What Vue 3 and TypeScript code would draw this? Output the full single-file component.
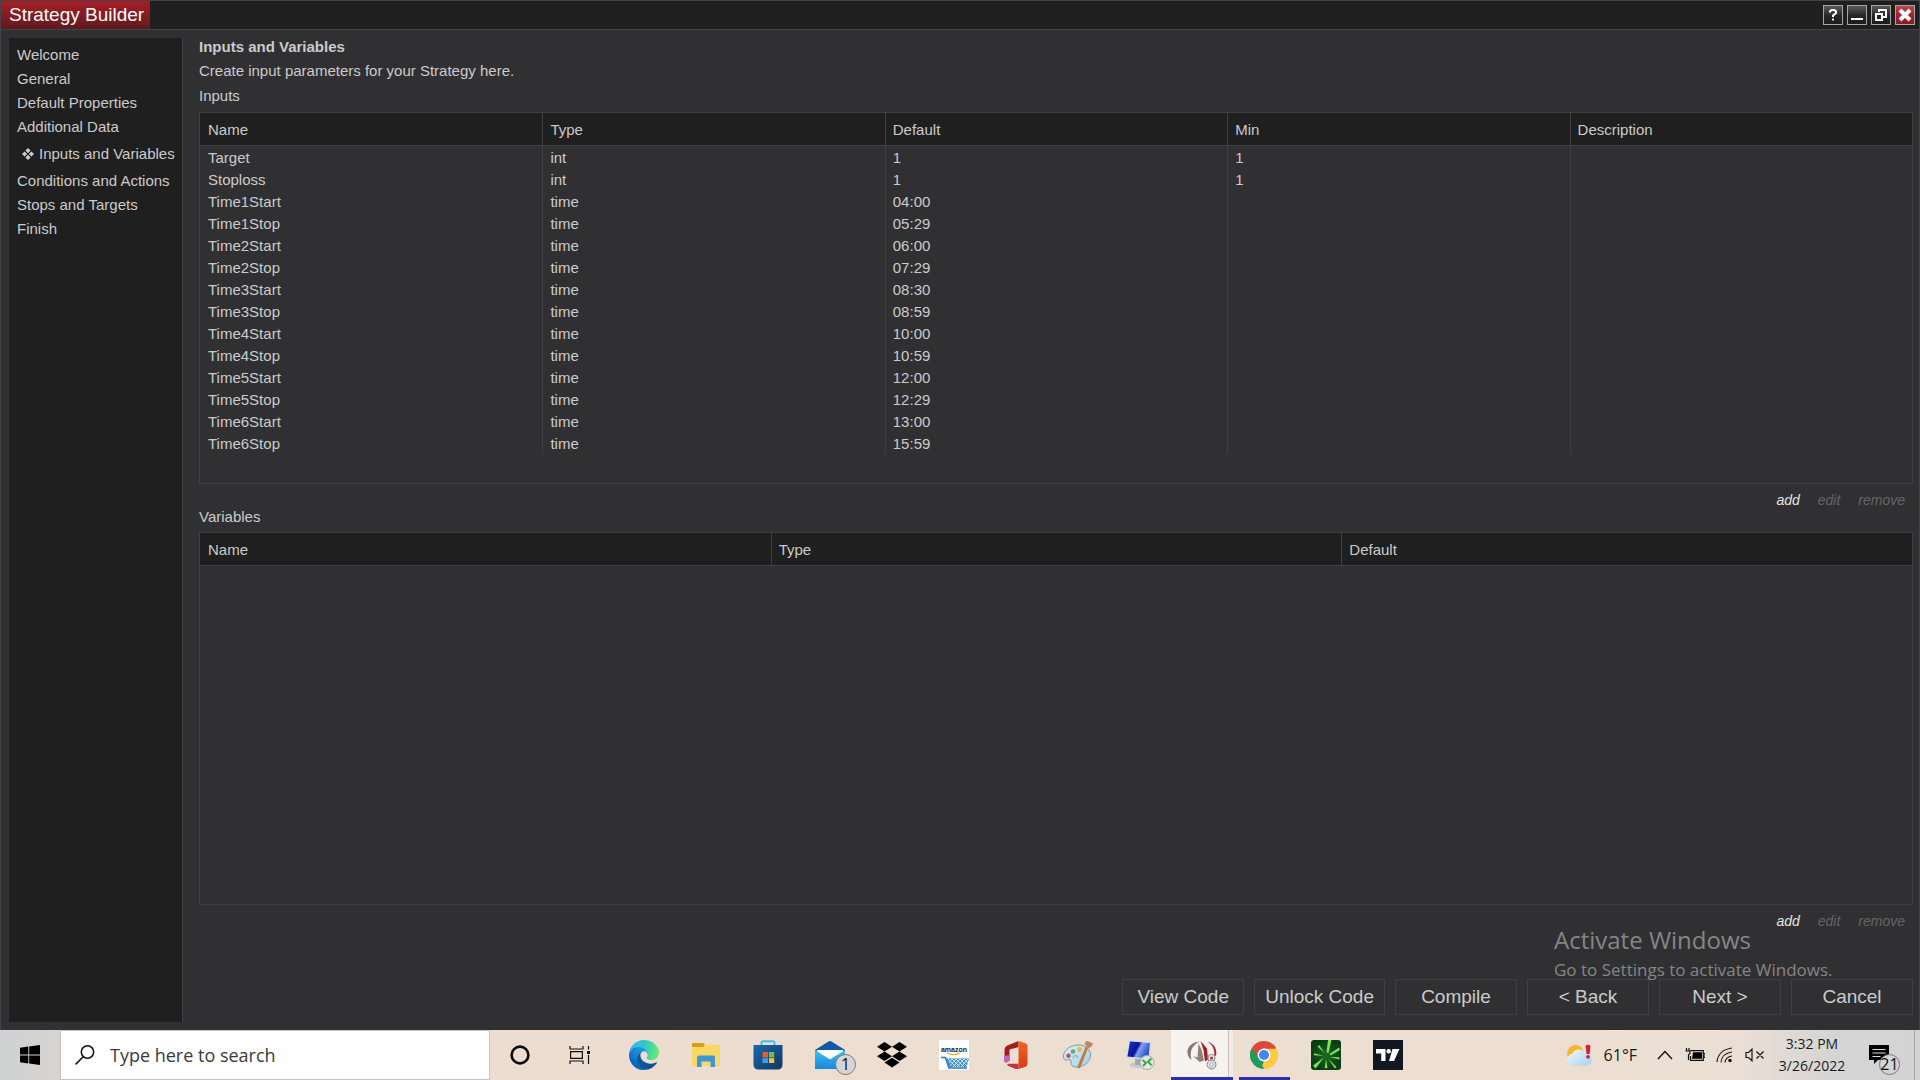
<script setup lang="ts">
interface InputRow {
  name: string
  type: string
  value: string
  min: string
}

const steps: string[] = [
  'Welcome',
  'General',
  'Default Properties',
  'Additional Data',
  'Inputs and Variables',
  'Conditions and Actions',
  'Stops and Targets',
  'Finish',
]
const activeStep = 'Inputs and Variables'

const inputColumns: string[] = ['Name', 'Type', 'Default', 'Min', 'Description']
const variableColumns: string[] = ['Name', 'Type', 'Default']

const timeRow = (name: string, value: string): InputRow => ({ name, type: 'time', value, min: '' })

const inputs: InputRow[] = [
  { name: 'Target', type: 'int', value: '1', min: '1' },
  { name: 'Stoploss', type: 'int', value: '1', min: '1' },
  timeRow('Time1Start', '04:00'),
  timeRow('Time1Stop', '05:29'),
  timeRow('Time2Start', '06:00'),
  timeRow('Time2Stop', '07:29'),
  timeRow('Time3Start', '08:30'),
  timeRow('Time3Stop', '08:59'),
  timeRow('Time4Start', '10:00'),
  timeRow('Time4Stop', '10:59'),
  timeRow('Time5Start', '12:00'),
  timeRow('Time5Stop', '12:29'),
  timeRow('Time6Start', '13:00'),
  timeRow('Time6Stop', '15:59'),
]

const actions: string[] = ['View Code', 'Unlock Code', 'Compile', '< Back', 'Next >', 'Cancel']
</script>

<template>
  <div class="desktop">
    <div class="window">
      <header class="titlebar">
        <h1 class="title">Strategy Builder</h1>
        <div class="controls">
          <button class="control" aria-label="Help">
            <svg viewBox="0 0 18 18"><path d="M6 6.500V5.500L7.500 4H10.500L12 5.500V7L9 9.500V11M9 12.500V14.500" fill="none" stroke="#fff" stroke-width="2" /></svg>
          </button>
          <button class="control" aria-label="Minimize">
            <svg viewBox="0 0 18 18"><path d="M3 12h12v2H3z" fill="#fff" /></svg>
          </button>
          <button class="control" aria-label="Restore">
            <svg viewBox="0 0 18 18" fill="none" stroke="#fff" stroke-width="2"><path d="M7 6V4h7v7h-3" /><path d="M4 8h6v6H4z" /></svg>
          </button>
          <button class="control close" aria-label="Close">
            <svg viewBox="0 0 18 18"><path d="M4 4l10 10M14 4L4 14" fill="none" stroke="#fff" stroke-width="4" /></svg>
          </button>
        </div>
      </header>

      <div class="body">
        <nav class="sidebar">
          <a v-for="step in steps" :key="step" href="#" class="step" :class="{ active: step === activeStep }">
            <svg v-if="step === activeStep" class="mark" viewBox="0 0 12 12"><path d="M6 0l2.600 2.600L6 5.200 3.400 2.600zM6 6.800l2.600 2.600L6 12 3.400 9.400zM2.600 3.400L5.200 6 2.600 8.600 0 6zM9.400 3.400L12 6 9.400 8.600 6.800 6z" fill="currentColor" /></svg>
            {{ step }}
          </a>
        </nav>

        <main class="main">
          <h2 class="heading">Inputs and Variables</h2>
          <p class="line">Create input parameters for your Strategy here.</p>
          <h3 class="caption">Inputs</h3>
          <section class="panel inputs">
            <table class="grid">
              <thead>
                <tr><th v-for="c in inputColumns" :key="c" scope="col">{{ c }}</th></tr>
              </thead>
              <tbody>
                <tr v-for="row in inputs" :key="row.name">
                  <td>{{ row.name }}</td>
                  <td>{{ row.type }}</td>
                  <td>{{ row.value }}</td>
                  <td>{{ row.min }}</td>
                  <td></td>
                </tr>
              </tbody>
            </table>
          </section>
          <div class="links">
            <button>add</button>
            <button disabled>edit</button>
            <button disabled>remove</button>
          </div>

          <h3 class="label">Variables</h3>
          <section class="panel variables">
            <table class="grid">
              <thead>
                <tr><th v-for="c in variableColumns" :key="c" scope="col">{{ c }}</th></tr>
              </thead>
            </table>
          </section>
          <div class="links">
            <button>add</button>
            <button disabled>edit</button>
            <button disabled>remove</button>
          </div>

          <div class="actions">
            <button v-for="a in actions" :key="a">{{ a }}</button>
          </div>

          <div class="watermark">
            <p class="big">Activate Windows</p>
            <p>Go to Settings to activate Windows.</p>
          </div>
        </main>
      </div>
    </div>

    <footer class="taskbar">
      <button class="start" aria-label="Start">
        <svg width="20" height="20" viewBox="0 0 20 20"><path d="M0 2.700L8.300 1.600V9.500H0zM9.200 1.400L20 0V9.500H9.200zM0 10.400h8.300v8L0 17.300zM9.200 10.400H20V20L9.200 18.500z" /></svg>
      </button>
      <label class="search">
        <svg width="20" height="20" viewBox="0 0 20 20" fill="none" stroke="#111" stroke-width="1.500"><circle cx="12.500" cy="7" r="6.200" /><path d="M8.200 11.800L.6 19.400" /></svg>
        <input type="text" placeholder="Type here to search" aria-label="Search" />
      </label>

      <button class="tool" aria-label="Cortana">
        <svg width="20" height="20" viewBox="0 0 20 20"><circle cx="10" cy="10" r="8.400" fill="none" stroke="#0a0a0a" stroke-width="2.600" /></svg>
      </button>
      <button class="tool" aria-label="Task view">
        <svg width="22" height="20" viewBox="0 0 22 20" fill="none" stroke="#111" stroke-width="1.200"><path d="M1 1v3h13V1M1 19v-3h13v3M1.600 6.600h11.800v6.800H1.600zM19.500 1v3.500M19.500 10v9" /><path d="M18 6h3v3h-3z" fill="#111" stroke="none" /></svg>
      </button>

      <div class="apps">
        <button class="app" aria-label="Edge">
          <svg width="30" height="30" viewBox="0 0 256 256">
            <defs>
              <linearGradient id="edgeA" x1="60" y1="177" x2="241" y2="177" gradientUnits="userSpaceOnUse"><stop offset="0" stop-color="#0c59a4" /><stop offset="1" stop-color="#114a8b" /></linearGradient>
              <linearGradient id="edgeB" x1="150" y1="100" x2="46" y2="212" gradientUnits="userSpaceOnUse"><stop offset="0" stop-color="#1b9de2" /><stop offset=".6" stop-color="#1680d0" /><stop offset="1" stop-color="#0067c0" /></linearGradient>
              <linearGradient id="edgeC" x1="20" y1="60" x2="245" y2="110" gradientUnits="userSpaceOnUse"><stop offset="0" stop-color="#35b5e8" /><stop offset=".45" stop-color="#30c6cd" /><stop offset="1" stop-color="#66eb6e" /></linearGradient>
            </defs>
            <path fill="url(#edgeA)" d="M231.800 190.500c-3.400 1.800-6.900 3.400-10.500 4.700-11.500 4.300-23.600 6.500-35.900 6.500-47.300 0-88.500-32.500-88.500-74.300.1-11.400 6.400-21.900 16.400-27.300-42.800 1.800-53.800 46.400-53.800 72.500 0 73.900 68.100 81.400 82.800 81.400 7.900 0 19.800-2.300 27-4.600l1.300-.4c27.600-9.500 51-28.100 66.600-52.800 1.200-1.900.6-4.300-1.200-5.500-1.300-.8-2.900-.9-4.200-.2z" />
            <path fill="url(#edgeB)" d="M105.700 241.400c-8.900-5.500-16.600-12.800-22.700-21.300-26.300-36-18.400-86.500 17.600-112.800 3.800-2.700 7.700-5.200 11.900-7.200 3.100-1.500 8.400-4.100 15.500-4 10.100.1 19.600 4.900 25.700 13 4 5.400 6.300 11.900 6.400 18.700 0-.2 24.500-79.600-80-79.600-43.900 0-80 41.700-80 78.200-.2 19.300 4 38.500 12.100 56 27.600 58.800 94.800 87.600 156.400 67.100-21.100 6.600-44.100 3.700-62.900-8.100z" />
            <path fill="url(#edgeC)" d="M152.300 148.900c-.8 1-3.300 2.500-3.300 5.700 0 2.600 1.700 5.100 4.700 7.200 14.400 10 41.500 8.700 41.600 8.700 10.700 0 21.100-2.900 30.300-8.300 18.800-11 30.400-31.100 30.400-52.900.3-22.400-8-37.300-11.300-43.900C223.500 23.900 177.700 0 128 0 58 0 1 56.200 0 126.200c.5-36.500 36.800-66 80-66 3.500 0 23.500.3 42 10.100 16.300 8.600 24.900 18.900 30.800 29.200 6.200 10.700 7.300 24.100 7.300 29.500s-2.700 13.300-7.800 19.900z" />
          </svg>
        </button>
        <button class="app" aria-label="File Explorer">
          <svg width="28" height="24" viewBox="0 0 28 24">
            <path d="M1 0h10.500L13 1.500V5H0V1z" fill="#d99c12" />
            <path d="M13 1.500h14a1 1 0 011 1V23H1.500A1.500 1.500 0 010 21.500V4h11z" fill="#fbd765" />
            <path d="M5 24V14.500A2 2 0 017 12.500h14a2 2 0 012 2V24h-4.500v-5.500h-9V24z" fill="#3f97d6" />
          </svg>
        </button>
        <button class="app" aria-label="Microsoft Store">
          <svg width="30" height="30" viewBox="0 0 30 30">
            <defs><linearGradient id="store" x1="0" y1="0" x2="1" y2="1"><stop offset="0" stop-color="#1868ad" /><stop offset="1" stop-color="#173560" /></linearGradient></defs>
            <path d="M8.500 7V3a1.800 1.800 0 011.800-1.800h9.400A1.800 1.800 0 0121.500 3v4" fill="none" stroke="#45bfe9" stroke-width="2" />
            <path d="M.5 5h29v20a4.500 4.500 0 01-4.500 4.500H5A4.500 4.500 0 01.5 25z" fill="url(#store)" />
            <path d="M9.500 12H15v5.500H9.500z" fill="#f05a28" /><path d="M16 12h5.200v5.500H16z" fill="#7fba3a" />
            <path d="M9.500 18.200H15V23H9.500z" fill="#2aa8ea" /><path d="M16 18.200h5.200V23H16z" fill="#fcc52c" />
          </svg>
        </button>
        <button class="app" aria-label="Mail">
          <svg width="30" height="28" viewBox="0 0 30 28">
            <defs><linearGradient id="mail" x1="0" y1="0" x2="0" y2="1"><stop offset="0" stop-color="#3cc1f5" /><stop offset="1" stop-color="#1a86d9" /></linearGradient></defs>
            <path d="M0 9L13.500.5a3 3 0 013 0L30 9v6H0z" fill="#1259a8" />
            <path d="M2 9h26v7l-13 5L2 16z" fill="#fff" />
            <path d="M0 9l15 9.500L30 9v19H0z" fill="url(#mail)" />
            <path d="M0 28l15-9.500" stroke="#1d8bdc" />
          </svg>
          <span class="count">1</span>
        </button>
        <button class="app" aria-label="Dropbox">
          <svg width="30" height="26" viewBox="0 0 30 26"><path d="M7.500 0L15 4.700 7.500 9.400 0 4.700zM22.500 0L30 4.700l-7.500 4.700L15 4.700zM0 14.200l7.500-4.800 7.500 4.800-7.500 4.700zM22.500 9.400l7.500 4.800-7.500 4.700-7.500-4.700zM7.500 20.600l7.500-4.800 7.500 4.800L15 25.400z" /></svg>
        </button>
        <button class="app" aria-label="Amazon">
          <svg width="30" height="30" viewBox="0 0 30 30">
            <path d="M0 0h30v30H0z" fill="#fff" />
            <text x="15" y="11.500" text-anchor="middle" font-family="Liberation Sans, sans-serif" font-weight="700" font-size="7" fill="#222">amazon</text>
            <path d="M8 13q6.500 3.500 12.500 0" fill="none" stroke="#f39a1f" stroke-width="1.200" />
            <path d="M2 17.500h4.500L10 28h18" fill="none" stroke="#2a7ab8" stroke-width="1.600" />
            <path d="M7 18.500h23L27.500 27H10z" fill="#3f8cc4" />
            <path d="M9 19l8 8M13 19l8 8M17 19l8 8M21 19l7 7M25 19l4 4M13 19l-3 4M17 19l-6 7M21 19l-7 8M25 19l-7 8M29 19l-7 8" stroke="#fff" stroke-width=".8" />
          </svg>
        </button>
        <button class="app" aria-label="Office">
          <svg width="24" height="28" viewBox="0 0 24 28">
            <defs><linearGradient id="office" x1="0" y1="0" x2="0" y2="1"><stop offset="0" stop-color="#f0641e" /><stop offset="1" stop-color="#d83b18" /></linearGradient></defs>
            <path d="M14.500 0L4 4.200Q.5 5.600.5 9v10.500q0 2.500 2 1.700l3-1.400V8.500l9-2.500z" fill="#a51c1e" />
            <path d="M.5 15v4.500q0 2.500 2 1.700l3-1.400V14z" fill="#b763c8" />
            <path d="M14.500 0l7 2.200A3 3 0 0123.500 5v18a3 3 0 01-2 2.800l-7 2.200z" fill="url(#office)" />
            <path d="M4 22.700h10.500V28q-2 .2-4-.6L4 24.800q-1.600-1.400 0-2.100z" fill="#c8304a" />
          </svg>
        </button>
        <button class="app" aria-label="Paint">
          <svg width="30" height="30" viewBox="0 0 30 30">
            <defs><linearGradient id="palette" x1="0" y1="0" x2="1" y2="1"><stop offset="0" stop-color="#dff1fa" /><stop offset="1" stop-color="#9fcfe8" /></linearGradient></defs>
            <path d="M15 5C6 5.500 0 11 .5 17c.3 3 2.200 3.500 4 2.800 2-.7 3.800.2 3.600 2.400C7.700 26 11 27.500 15 27c7-.8 12.500-6 12.500-12S22 4.600 15 5z" fill="url(#palette)" stroke="#7799ae" />
            <circle cx="5.500" cy="15.800" r="2.200" fill="#c64e59" /><circle cx="10" cy="11.500" r="2.300" fill="#6fa66c" /><circle cx="16.500" cy="9.500" r="2.400" fill="#efb83a" />
            <path d="M10.500 18.500q-.5-3 2-2.800 2.300.2 2 2.500" fill="none" stroke="#84b5d0" stroke-width="1.300" />
            <path d="M24 7L15.500 28" stroke="#c07a3c" stroke-width="2.800" /><path d="M21.500 3.500q1-3 3-2.500l5.500 2.500q-.5 3.500-5 4.700z" fill="#bd8a5c" />
          </svg>
        </button>
        <button class="app" aria-label="Remote Desktop">
          <svg width="30" height="30" viewBox="0 0 30 30">
            <defs><linearGradient id="rdp" x1="0" y1="0" x2="1" y2=".4"><stop offset="0" stop-color="#1d35c4" /><stop offset=".5" stop-color="#0c149c" /><stop offset=".62" stop-color="#7fa4ee" /><stop offset="1" stop-color="#2d50cf" /></linearGradient></defs>
            <ellipse cx="13" cy="25" rx="8.500" ry="3" fill="#c5c8cc" /><path d="M10 19h6l1 6h-7z" fill="#a4a7ad" />
            <path d="M4 0l22.500 2-2 18L.8 17.500z" fill="#d5dce8" /><path d="M5 1.400l20 1.700-1.700 15.400-20.900-2.100z" fill="url(#rdp)" />
            <circle cx="22" cy="22.500" r="7" fill="#e3eae3" stroke="#a2aca4" /><path d="M17.500 20l3.500 2.800-3 3.200M26.500 18.500L23 21.500l3.500 3.800" fill="none" stroke="#38a43c" stroke-width="1.900" />
          </svg>
        </button>
        <button class="app active" aria-label="NinjaTrader">
          <svg width="30" height="30" viewBox="0 0 30 30">
            <path d="M12 1.500C4 2.500 0 7.500.5 13c.3 3 1.700 5.300 4 7C2.500 12 4 6.500 12 1.500z" fill="#85786d" />
            <path d="M11.500 3.500L14.500 9.500 17 20.500l-4.500 1.500L6 16l4.500 1.500z" fill="#8f8378" />
            <path d="M13.500 1l6.500 7.500 1 11-3 2L16.500 10z" fill="#a61d24" />
            <path d="M20.500 1.500C27 3.500 30.500 9 29 15.500l-1.800 1C28 10.500 26 5 20.500 1.500z" fill="#b0282d" />
            <circle cx="24.500" cy="18" r="3.600" fill="#eee" stroke="#888" /><circle cx="24.500" cy="18" r="1.500" fill="#b3252b" />
            <circle cx="24.500" cy="24.500" r="4.500" fill="#ddd" stroke="#888" /><circle cx="24.500" cy="24.500" r="1.800" fill="#fff" stroke="#aaa" />
          </svg>
        </button>
        <button class="app running" aria-label="Chrome">
          <svg width="28" height="28" viewBox="0 0 48 48">
            <path d="M24 24L3.200 12A24 24 0 0144.800 12z" fill="#db4a3c" />
            <path d="M24 24L44.800 12A24 24 0 0124 48z" fill="#fbca3e" />
            <path d="M24 24v24A24 24 0 013.200 12z" fill="#1d9d58" />
            <path d="M24 13h20.800L33.500 29.500z" fill="#fbca3e" /><path d="M33.500 29.500L24 48l-6-13z" fill="#fbca3e" /><path d="M3.200 12l11.300 17.500L24 35l-6 12z" fill="#1d9d58" />
            <path d="M3.200 12h0L14.500 29.500 14 18l10-5h20.800L44 11z" fill="#db4a3c" />
            <circle cx="24" cy="24" r="11" fill="#fff" /><circle cx="24" cy="24" r="8.700" fill="#4486f4" />
          </svg>
        </button>
        <button class="app" aria-label="Trading">
          <svg width="30" height="30" viewBox="0 0 30 30">
            <defs><radialGradient id="burst"><stop offset="0" stop-color="#1c6b22" /><stop offset="1" stop-color="#0a3d14" /></radialGradient></defs>
            <rect width="30" height="30" rx="3" fill="url(#burst)" />
            <path d="M15.500 12.500L17 0h3.500L17.500 13zM18.500 14L28 7.500 29 10l-9.500 5.500zM18.500 17l10 .2v2.200zM17 18.500L25.500 27l-1.500 1.500zM15 19l1.500 9-2.800.2zM13 17.500L4.500 28.500 2 25.500zM12.500 15.800L3 15.200v-2zM13.800 13.500L6.500 6.500 8.200 5z" fill="#7fe05c" />
          </svg>
        </button>
        <button class="app" aria-label="TradingView">
          <svg width="30" height="30" viewBox="0 0 30 30"><path d="M0 0h30v30H0z" fill="#131722" /><path d="M3 9h9.500v12H8.200v-7.500H3zM19.500 9h7L21 21h-5z" fill="#fff" /><circle cx="15.700" cy="11.200" r="2.200" fill="#fff" /></svg>
        </button>
      </div>

      <div class="tray">
        <button class="weather">
          <svg width="28" height="22" viewBox="0 0 28 22">
            <defs><linearGradient id="cloud" x1="0" y1="0" x2="1" y2="1"><stop offset="0" stop-color="#f2f9ff" /><stop offset="1" stop-color="#a4d0f2" /></linearGradient></defs>
            <circle cx="9.500" cy="9.500" r="8.500" fill="#f7b62e" />
            <path d="M7 21.500a6 6 0 01-.6-11.900 7 7 0 0113.100.7 5.600 5.600 0 011.500 11.200z" fill="url(#cloud)" />
            <path d="M19.500 1.800q2.500-2 5 0L23.600 10h-3z" fill="#cf2233" /><circle cx="22" cy="12.800" r="1.900" fill="#cf2233" />
          </svg>
          <span>61°F</span>
        </button>
        <button aria-label="Show hidden icons"><svg width="16" height="10" viewBox="0 0 16 10"><path d="M1 9l7-7.500L15 9" fill="none" stroke="#111" stroke-width="1.400" /></svg></button>
        <button aria-label="Battery">
          <svg width="20" height="14" viewBox="0 0 20 14"><path d="M5.500 2.700h12.800v9.600H5.500V8M18.500 5.500H20v4h-1.500" fill="none" stroke="#111" stroke-width="1.200" /><path d="M8 4.300h9v6.400H7z" /><path d="M1.500 0v3M4 0v3M.5 3h4.500v2.500l-1.500 1.500v5" fill="none" stroke="#111" stroke-width="1.200" /></svg>
        </button>
        <button aria-label="Network">
          <svg width="18" height="16" viewBox="0 0 18 16" fill="none" stroke="#222" stroke-width="1.200"><path d="M1 15Q2 3 16 1M5 15.500Q5.500 6.500 16 5M9 15.500Q9.500 10 16 9" /><circle cx="14" cy="13.500" r="1.700" fill="#111" stroke="none" /></svg>
        </button>
        <button aria-label="Volume muted">
          <svg width="20" height="14" viewBox="0 0 20 14" fill="none" stroke="#111" stroke-width="1.200"><path d="M1 4.500h2.500L7 1.200v11.600L3.500 9.500H1zM11.500 3.500l7 7M18.500 3.500l-7 7" /></svg>
        </button>
        <button class="clock"><span>3:32 PM</span><span>3/26/2022</span></button>
        <button class="notice" aria-label="Notifications">
          <svg width="20" height="20" viewBox="0 0 20 20"><path d="M0 0h20v15H9l-4 4v-4H0z" /><path d="M3.500 4.500h13M3.500 8h13M3.500 11.500h8" stroke="#ddd" stroke-width="1.200" /></svg>
          <span class="count">21</span>
        </button>
        <div class="peek"></div>
      </div>
    </footer>
  </div>
</template>

<style>
body {
  background: #303032;
}
</style>

<style scoped>
* {
  box-sizing: border-box;
}
h1, h2, h3, p {
  margin: 0;
  font-weight: 400;
  font-size: 15px;
}
button {
  margin: 0;
  padding: 0;
  border: 0;
  background: none;
  color: inherit;
  font: inherit;
}
svg {
  display: block;
}
.desktop {
  display: flex;
  flex-direction: column;
  min-height: 100vh;
  font: 15px/24px "Liberation Sans", Arial, sans-serif;
  color: #cbcbcb;
}
.window {
  flex: 1;
  display: flex;
  flex-direction: column;
  background: #303032;
  border: 1px solid #434345;
  border-bottom: 0;
}
.titlebar {
  display: flex;
  justify-content: space-between;
  align-items: flex-start;
  height: 29px;
  background: #1f1f1f;
  border-bottom: 1px solid #434345;
}
.title {
  padding: 0 6px 0 8px;
  font-size: 19px;
  line-height: 28px;
  color: #fff;
  background: linear-gradient(#a81e26, #7d1b22 60%, #5c1a1f);
}
.controls {
  display: flex;
  gap: 4px;
  padding: 4px 4px 0 0;
}
.control {
  width: 20px;
  height: 20px;
  border: 1px solid #a5a5a5;
  background: linear-gradient(#5a5a5a, #262628 55%, #1c1c1c);
}
.control.close {
  background: linear-gradient(#bb4a50, #a5202a 50%, #8e1c24);
}
.body {
  flex: 1;
  display: flex;
}
.sidebar {
  width: 174px;
  margin: 8px 0 8px 8px;
  padding: 5px 0 0 8px;
  background: #1f1f1f;
  border-right: 1px solid #3f3f41;
}
.step {
  display: block;
  line-height: 24px;
  white-space: nowrap;
  color: inherit;
  text-decoration: none;
}
.step.active {
  display: flex;
  align-items: center;
  gap: 5px;
  padding-left: 5px;
  line-height: 30px;
}
.mark {
  width: 12px;
  height: 12px;
}
.main {
  flex: 1;
  display: flex;
  flex-direction: column;
  position: relative;
  min-width: 0;
  padding: 5px 6px 15px 16px;
}
.heading {
  font-weight: 700;
}
.caption {
  line-height: 26px;
}
.panel {
  border: 1px solid #3f3f41;
}
.inputs {
  margin-top: 3px;
  padding-bottom: 29px;
}
.variables {
  flex: 1;
}
.grid {
  width: 100%;
  table-layout: fixed;
  border-collapse: separate;
  border-spacing: 0;
  line-height: 20px;
}
.grid th,
.grid td {
  height: 22px;
  padding: 2px 7px 0;
  text-align: left;
  font-weight: 400;
}
.grid th:first-child,
.grid td:first-child {
  padding-left: 8px;
}
.grid th {
  height: 33px;
  background: #1f1f1f;
  border-bottom: 1px solid #3f3f41;
}
.grid th + th,
.grid td + td {
  border-left: 1px solid #3f3f41;
}
.links {
  display: flex;
  justify-content: flex-end;
  gap: 18px;
  margin-top: 7px;
  padding-right: 8px;
  font-size: 14px;
  font-style: italic;
  line-height: 18px;
}
.links button {
  color: #e6e6e6;
}
.links button:disabled {
  color: #656567;
}
.label {
  margin-bottom: 7px;
  line-height: 16px;
}
.actions {
  display: flex;
  justify-content: flex-end;
  gap: 10px;
  margin-top: 49px;
}
.actions button {
  min-width: 122px;
  height: 36px;
  padding: 0 10px;
  border: 1px solid #3f3f41;
  font-size: 19px;
}
.watermark {
  position: absolute;
  right: 0;
  bottom: 46px;
  width: 365px;
  font-family: "Open Sans", "Segoe UI", sans-serif;
  color: #868686;
  pointer-events: none;
}
.watermark p {
  font-size: 17px;
  line-height: 28px;
}
.watermark .big {
  font-size: 24px;
  line-height: 32px;
}
.taskbar {
  display: flex;
  height: 50px;
  font-family: "Open Sans", "Segoe UI", sans-serif;
  color: #1a1a1a;
  background: linear-gradient(90deg, #d0d1d2, #d6d4d2 61px, #ecddd0 490px, #ecdfd2 1600px, #ebdfd5 1740px, #d5d5d5 1830px, #d3d3d4);
}
.start {
  width: 60px;
  display: flex;
  align-items: center;
  justify-content: center;
}
.search {
  width: 430px;
  display: flex;
  align-items: center;
  gap: 15px;
  padding-left: 14px;
  background: #fff;
  border: 1px solid #c4c4c4;
}
.search input {
  flex: 1;
  min-width: 0;
  padding: 0;
  border: 0;
  outline: 0;
  background: none;
  font: inherit;
  font-size: 18px;
}
.search input::placeholder {
  color: #3a3a3a;
  opacity: 1;
}
.tool {
  width: 60px;
  display: flex;
  align-items: center;
  justify-content: center;
}
.apps {
  display: flex;
  margin-left: 3px;
}
.app {
  position: relative;
  width: 62px;
  display: flex;
  align-items: center;
  justify-content: center;
}
.app.active {
  background: linear-gradient(90deg, #f6f2ee 57px, #c9bfb8 57px, #c9bfb8 58px, #f3ebe4 58px);
  border-bottom: 3px solid #2d2db4;
  padding-top: 3px;
}
.app.running::after {
  content: "";
  position: absolute;
  left: 6px;
  right: 5px;
  bottom: 0;
  height: 3px;
  background: #2d2db4;
}
.count {
  position: absolute;
  right: 5px;
  bottom: 5px;
  width: 21px;
  height: 21px;
  border: 1px solid #777;
  border-radius: 50%;
  background: #d5d5d5;
  font-size: 16px;
  line-height: 19px;
  text-align: center;
  color: #111;
}
.tray {
  display: flex;
  align-items: stretch;
  margin-left: auto;
}
.tray button {
  display: flex;
  align-items: center;
  justify-content: center;
  width: 30px;
}
.tray .weather {
  width: auto;
  gap: 10px;
  margin-right: 13px;
  font-size: 16px;
}
.tray .clock {
  width: 84px;
  flex-direction: column;
  font-size: 14px;
  line-height: 22px;
}
.tray .notice {
  position: relative;
  width: 60px;
  padding-right: 10px;
}
.notice .count {
  right: 14px;
  display: flex;
  justify-content: center;
}
.peek {
  width: 6px;
  border-left: 1px solid #a5a5a5;
}
</style>
